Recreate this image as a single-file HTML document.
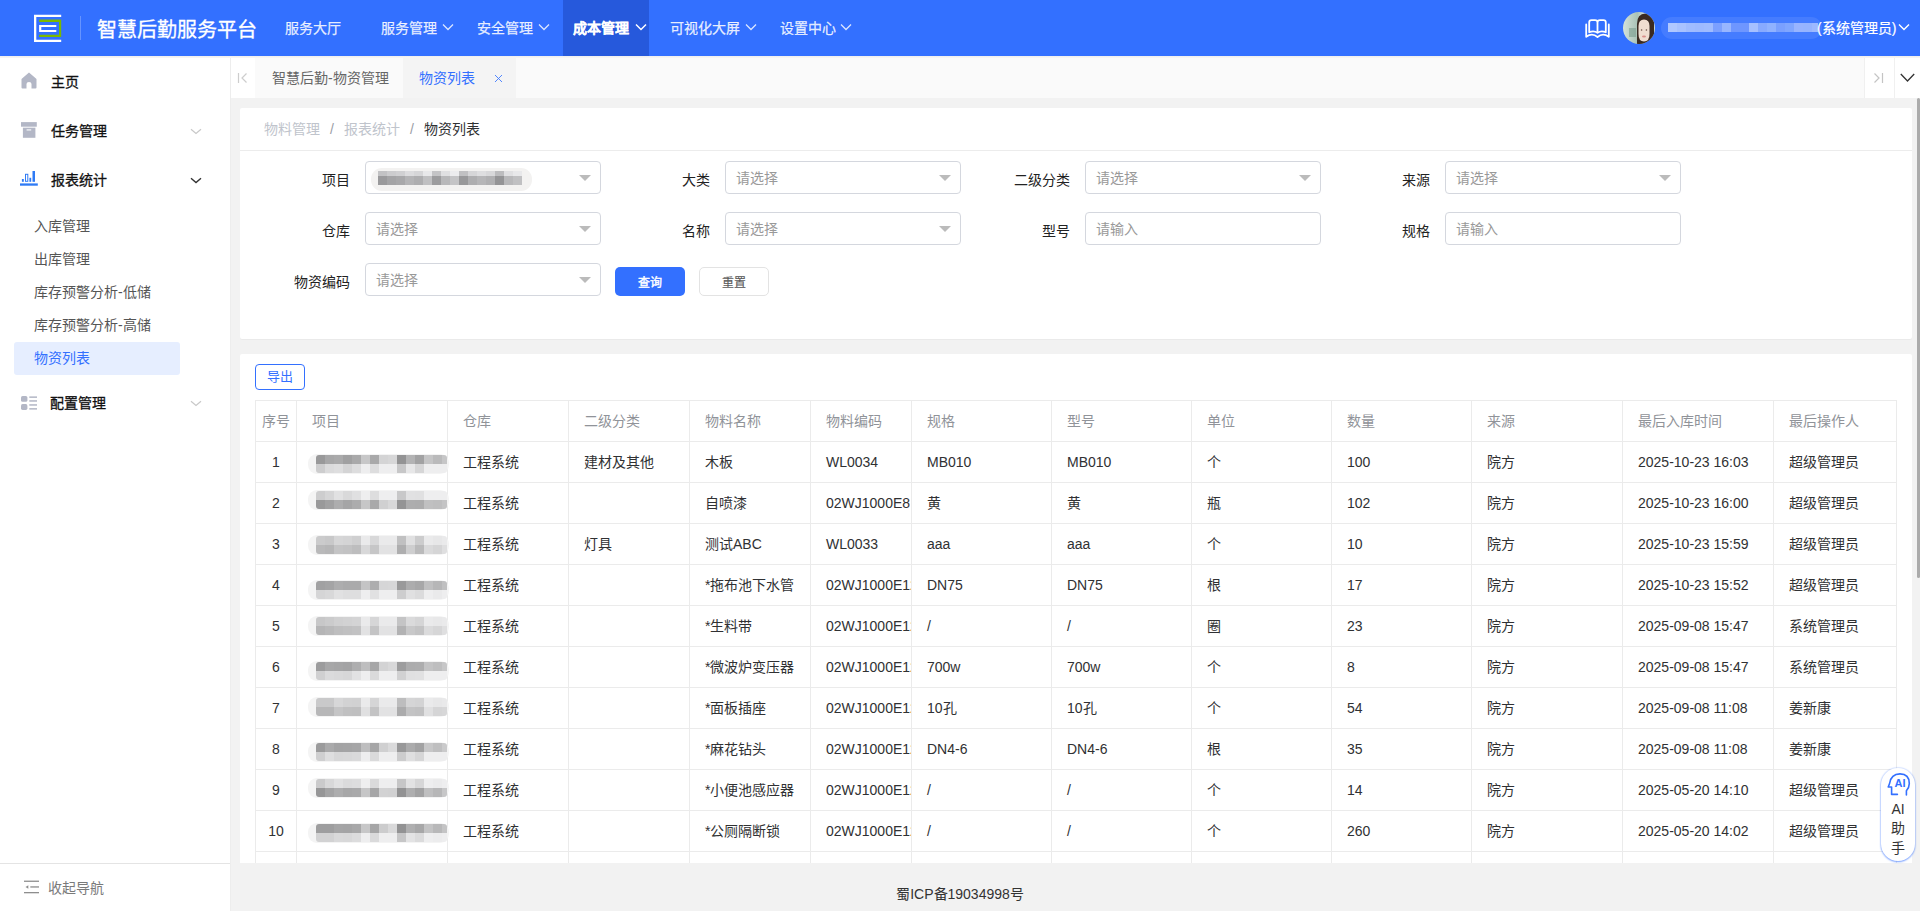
<!DOCTYPE html>
<html lang="zh-CN">
<head>
<meta charset="utf-8">
<style>
*{box-sizing:border-box;margin:0;padding:0}
html,body{width:1920px;height:911px;overflow:hidden}
body{position:relative;font-family:"Liberation Sans",sans-serif;font-size:14px;color:#303133;background:#f2f2f2}
.a{position:absolute}
.t{position:absolute;white-space:nowrap;line-height:20px}
#hdr{left:0;top:0;width:1920px;height:56px;background:#3370ff}
.nav{color:rgba(255,255,255,.86);font-size:14px;top:18px;-webkit-text-stroke:0.25px rgba(255,255,255,.86)}
.chev{position:absolute}
#side{left:0;top:56px;width:231px;height:855px;background:#fff;border-right:1px solid #ededed}
.m1{color:#111;font-size:14px;-webkit-text-stroke:0.3px #111}
.m2{color:#555;font-size:14px}
#tabs{left:231px;top:57px;width:1689px;height:41px;background:#fafafa}
.card{background:#fff;border-radius:2px;box-shadow:0 1px 1px rgba(0,0,0,.035)}
.lbl{color:#222;font-size:14px;text-align:right}
.sel{position:absolute;height:33px;width:236px;border:1px solid #d4d7de;border-radius:4px;background:#fff}
.sel .ph{position:absolute;left:10px;top:6px;line-height:20px;color:#999;font-size:14px}
.sel .ar{position:absolute;left:213px;top:13px;width:0;height:0;border-left:6px solid transparent;border-right:6px solid transparent;border-top:6px solid #bbb}
</style>
</head>
<body>
<!-- HEADER -->
<div id="hdr" class="a">
  <svg class="a" style="left:30px;top:10px" width="36" height="36" viewBox="0 0 36 36">
    <path fill="#fff" d="M4 4.7H31.2V6.9H6.3V29.8H31.2V32H4Z"/>
    <path fill="#7ab800" d="M9.1 9.5H31.2V27H9.1V24.7H29V11.9H9.1Z"/>
    <path fill="#fff" d="M9.1 15H26.3V17H11.3V20H26.3V21.9H9.1Z"/>
  </svg>
  <div class="a" style="left:80px;top:16px;width:1px;height:24px;background:rgba(255,255,255,.25)"></div>
  <div class="t" style="left:97px;top:17px;font-size:20px;line-height:26px;color:#fff;-webkit-text-stroke:0.3px #fff">智慧后勤服务平台</div>
  <div class="a" style="left:563px;top:0;width:86px;height:56px;background:#2659dc"></div>
  <div class="t nav" style="left:285px">服务大厅</div>
  <div class="t nav" style="left:381px">服务管理</div>
  <svg class="chev" style="left:442px;top:22px" width="12" height="10" viewBox="0 0 12 10"><path d="M1 2.5L6 7.5L11 2.5" fill="none" stroke="rgba(255,255,255,.82)" stroke-width="1.3"/></svg>
  <div class="t nav" style="left:477px">安全管理</div>
  <svg class="chev" style="left:538px;top:22px" width="12" height="10" viewBox="0 0 12 10"><path d="M1 2.5L6 7.5L11 2.5" fill="none" stroke="rgba(255,255,255,.82)" stroke-width="1.3"/></svg>
  <div class="t nav" style="left:573px;color:#fff;font-weight:bold">成本管理</div>
  <svg class="chev" style="left:635px;top:22px" width="12" height="10" viewBox="0 0 12 10"><path d="M1 2.5L6 7.5L11 2.5" fill="none" stroke="#fff" stroke-width="1.5"/></svg>
  <div class="t nav" style="left:670px">可视化大屏</div>
  <svg class="chev" style="left:745px;top:22px" width="12" height="10" viewBox="0 0 12 10"><path d="M1 2.5L6 7.5L11 2.5" fill="none" stroke="rgba(255,255,255,.82)" stroke-width="1.3"/></svg>
  <div class="t nav" style="left:780px">设置中心</div>
  <svg class="chev" style="left:840px;top:22px" width="12" height="10" viewBox="0 0 12 10"><path d="M1 2.5L6 7.5L11 2.5" fill="none" stroke="rgba(255,255,255,.82)" stroke-width="1.3"/></svg>
  <!-- book icon -->
  <svg class="a" style="left:1578px;top:10px" width="40" height="36" viewBox="0 0 40 36">
    <path d="M19.5 22.8C17 21 14 21 11.2 22.2V12.5Q11.2 10.2 13.5 10.2H17Q19.5 10.2 19.5 12.5Z M19.5 22.8C22 21 25 21 27.8 22.2V12.5Q27.8 10.2 25.5 10.2H22Q19.5 10.2 19.5 12.5Z" fill="none" stroke="#fff" stroke-width="1.8" stroke-linejoin="round"/>
    <path d="M8.2 14.5V26.8C12 24 16 24 19.5 27C23 24 27 24 30.8 26.8V14.5" fill="none" stroke="#fff" stroke-width="1.8" stroke-linejoin="round" stroke-linecap="round"/>
  </svg>
  <!-- avatar -->
  <svg class="a" style="left:1623px;top:12px" width="32" height="32" viewBox="0 0 32 32">
    <defs><clipPath id="cc"><circle cx="16" cy="16" r="16"/></clipPath>
    <linearGradient id="bgg" x1="0" y1="0" x2="1" y2="0"><stop offset="0" stop-color="#d4e2da"/><stop offset=".45" stop-color="#a9c2b6"/><stop offset=".6" stop-color="#c9d6cf"/></linearGradient></defs>
    <g clip-path="url(#cc)">
      <rect width="32" height="32" fill="url(#bgg)"/>
      <rect x="6" y="16" width="7" height="9" fill="#7a9c8e" opacity=".6"/>
      <path d="M14 34V12Q14 1.5 22.5 1.5Q31.5 1.5 31 12V30L27 34Z" fill="#3a2a22"/>
      <path d="M15.5 14Q15.5 7.5 21 7.5Q26.5 7.5 26.5 14V22Q26.5 29.5 21 29.5Q15.5 29.5 15.5 22Z" fill="#f0ddd0"/>
      <ellipse cx="21" cy="24.5" rx="2" ry="1" fill="#d98f8a"/>
      <circle cx="18.6" cy="18" r=".8" fill="#6b5046"/><circle cx="23.4" cy="18" r=".8" fill="#6b5046"/>
    </g>
  </svg>
  <!-- blurred name -->
  <div class="a" style="left:1812px;top:23px;width:6px;height:9px;background:#94b2ff"></div><div class="a" style="left:1661px;top:17px;width:161px;height:22px;border-radius:11px;background:rgba(255,255,255,.09)"></div>
  <div class="a" style="left:1668px;top:23px;width:9px;height:9px;background:#b0c8ff"></div><div class="a" style="left:1677px;top:23px;width:9px;height:9px;background:#a8c2ff"></div><div class="a" style="left:1686px;top:23px;width:9px;height:9px;background:#a0bcff"></div><div class="a" style="left:1695px;top:23px;width:9px;height:9px;background:#9ebaff"></div><div class="a" style="left:1704px;top:23px;width:9px;height:9px;background:#a0bcff"></div><div class="a" style="left:1713px;top:23px;width:9px;height:9px;background:#7ca0ff"></div><div class="a" style="left:1722px;top:23px;width:9px;height:9px;background:#98b6ff"></div><div class="a" style="left:1731px;top:23px;width:9px;height:9px;background:#6e96ff"></div><div class="a" style="left:1740px;top:23px;width:9px;height:9px;background:#6e96ff"></div><div class="a" style="left:1749px;top:23px;width:9px;height:9px;background:#a6c0ff"></div><div class="a" style="left:1758px;top:23px;width:9px;height:9px;background:#88aaff"></div><div class="a" style="left:1767px;top:23px;width:9px;height:9px;background:#90b2ff"></div><div class="a" style="left:1776px;top:23px;width:9px;height:9px;background:#7aa0ff"></div><div class="a" style="left:1785px;top:23px;width:9px;height:9px;background:#80a6ff"></div><div class="a" style="left:1794px;top:23px;width:9px;height:9px;background:#98b4ff"></div><div class="a" style="left:1803px;top:23px;width:9px;height:9px;background:#96b4ff"></div>
  <div class="t" style="left:1817px;top:18px;color:#fff;font-size:14px;-webkit-text-stroke:0.2px #fff">(系统管理员)</div>
  <svg class="chev" style="left:1898px;top:22px" width="12" height="10" viewBox="0 0 12 10"><path d="M1 2.5L6 7.5L11 2.5" fill="none" stroke="#fff" stroke-width="1.4"/></svg>
</div>


<!-- SIDEBAR -->
<div id="side" class="a">
  <svg class="a" style="left:21px;top:16px" width="16" height="17" viewBox="0 0 16 17"><path d="M8 0.5L15.5 7V15.5Q15.5 16.5 14.5 16.5H10.5V12Q10.5 10 8 10Q5.5 10 5.5 12V16.5H1.5Q0.5 16.5 0.5 15.5V7Z" fill="#b3b7c6"/></svg>
  <div class="t m1" style="left:51px;top:16px">主页</div>

  <svg class="a" style="left:21px;top:66px" width="16" height="16" viewBox="0 0 16 16"><rect x="0" y="0.1" width="15.8" height="4.6" fill="#b3b7c6"/><rect x="1.9" y="5.7" width="12.5" height="10.1" fill="#b3b7c6"/><rect x="5.6" y="7.1" width="4.6" height="1.6" fill="#e6e8ee"/></svg>
  <div class="t m1" style="left:51px;top:65px">任务管理</div>
  <svg class="a" style="left:190px;top:127px;top:71px" width="12" height="8" viewBox="0 0 12 8"><path d="M1 2.3L6 6.5L11 2.3" fill="none" stroke="#c8c8c8" stroke-width="1.2"/></svg>

  <svg class="a" style="left:20px;top:115px" width="18" height="16" viewBox="0 0 18 16"><rect x="0" y="12.4" width="17.8" height="2.3" fill="#2f7bf5"/><rect x="1.9" y="8" width="1.9" height="2.8" fill="#2f7bf5"/><rect x="5.5" y="3.3" width="2.3" height="7" fill="none" stroke="#2f7bf5" stroke-width="1"/><rect x="9.4" y="6.8" width="1.8" height="4" fill="#2f7bf5"/><rect x="12.5" y="0" width="2.5" height="10.8" fill="#2f7bf5"/></svg>
  <div class="t m1" style="left:51px;top:114px">报表统计</div>
  <svg class="a" style="left:190px;top:120px" width="12" height="8" viewBox="0 0 12 8"><path d="M1 2.2L6 6.5L11 2.2" fill="none" stroke="#333" stroke-width="1.4"/></svg>

  <div class="t m2" style="left:34px;top:160px">入库管理</div>
  <div class="t m2" style="left:34px;top:193px">出库管理</div>
  <div class="t m2" style="left:34px;top:226px">库存预警分析-低储</div>
  <div class="t m2" style="left:34px;top:259px">库存预警分析-高储</div>
  <div class="a" style="left:14px;top:286px;width:166px;height:33px;border-radius:3px;background:#e6eeff"></div>
  <div class="t m2" style="left:34px;top:292px;color:#3370ff">物资列表</div>

  <svg class="a" style="left:21px;top:340px" width="17" height="15" viewBox="0 0 17 15"><rect x="0" y="0" width="6.4" height="5.8" rx="1.6" fill="#b3b7c6"/><rect x="0" y="8.1" width="6.4" height="5.8" rx="1.6" fill="#b3b7c6"/><rect x="8.3" y="0.4" width="7.7" height="1.5" fill="#b3b7c6"/><rect x="8.3" y="4.2" width="7.7" height="1.5" fill="#b3b7c6"/><rect x="8.3" y="8.2" width="7.7" height="1.5" fill="#b3b7c6"/><rect x="8.3" y="12.1" width="7.7" height="1.5" fill="#b3b7c6"/></svg>
  <div class="t m1" style="left:50px;top:337px">配置管理</div>
  <svg class="a" style="left:190px;top:343px" width="12" height="8" viewBox="0 0 12 8"><path d="M1 2.3L6 6.5L11 2.3" fill="none" stroke="#c8c8c8" stroke-width="1.2"/></svg>

  <div class="a" style="left:0;top:807px;width:230px;height:1px;background:#e4e4e4"></div>
  <svg class="a" style="left:24px;top:824px" width="16" height="14" viewBox="0 0 16 14"><rect x="0" y="0.6" width="15" height="1.3" fill="#8e8e8e"/><rect x="6.3" y="6.3" width="8.7" height="1.3" fill="#8e8e8e"/><rect x="0" y="12" width="15" height="1.3" fill="#8e8e8e"/><path d="M1.5 7L4.3 5.2V8.8Z" fill="#8e8e8e"/></svg>
  <div class="t" style="left:48px;top:822px;color:#7a7a7a;font-size:14px">收起导航</div>
</div>

<!-- TABS -->
<div id="tabs" class="a">
  <div class="a" style="left:0;top:0;width:24px;height:41px;background:#fff"></div>
  <svg class="a" style="left:6px;top:15px" width="12" height="12" viewBox="0 0 12 12"><path d="M1.5 1V11" stroke="#cdcdcd" stroke-width="1.2"/><path d="M9.5 1.5L5 6L9.5 10.5" fill="none" stroke="#cdcdcd" stroke-width="1.2"/></svg>
  <div class="t" style="left:41px;top:11px;color:#666">智慧后勤-物资管理</div>
  <div class="a" style="left:172px;top:1px;width:113px;height:40px;background:#f4f4f4"></div>
  <div class="t" style="left:188px;top:11px;color:#3370ff">物资列表</div>
  <svg class="a" style="left:263px;top:17px" width="9" height="9" viewBox="0 0 9 9"><path d="M1 1L8 8M8 1L1 8" stroke="#3f7bff" stroke-width="0.9"/></svg>
  <div class="a" style="left:1633px;top:0;width:56px;height:41px;background:#fff"></div>
  <div class="a" style="left:1633px;top:0;width:1px;height:41px;background:#f0f0f0"></div>
  <div class="a" style="left:1663px;top:0;width:1px;height:41px;background:#f0f0f0"></div>
  <svg class="a" style="left:1641px;top:15px" width="12" height="12" viewBox="0 0 12 12"><path d="M10.5 1V11" stroke="#c4c4c4" stroke-width="1.2"/><path d="M2.5 1.5L7 6L2.5 10.5" fill="none" stroke="#c4c4c4" stroke-width="1.2"/></svg>
  <svg class="a" style="left:1669px;top:16px" width="15" height="10" viewBox="0 0 15 10"><path d="M0.8 1L7.5 8L14.2 1" fill="none" stroke="#333" stroke-width="1.3"/></svg>
</div>
<div class="a" style="left:0;top:56px;width:1920px;height:2px;background:linear-gradient(#ededed,#f6f6f6)"></div>

<div class="a" style="left:231px;top:98px;width:1686px;height:765px;overflow:hidden">
<div class="a card" style="left:9px;top:10px;width:1672px;height:231px">
<div class="t" style="left:24px;top:11px;color:#c0c4cc;font-size:14px">物料管理<span style="margin:0 10px;color:#9a9da5">/</span>报表统计<span style="margin:0 10px;color:#9a9da5">/</span><span style="color:#303133">物资列表</span></div>
<div class="a" style="left:0;top:42px;width:1672px;height:1px;background:#ececec"></div>
<div class="t lbl" style="left:10px;top:62px;width:100px">项目</div>
<div class="sel" style="left:125px;top:53px"><div class="a" style="left:5px;top:6px;width:161px;height:23px;border-radius:11px;background:#f3f2f1"></div><div class="a" style="left:12px;top:9px;width:9px;height:5px;background:rgb(194,194,196)"></div><div class="a" style="left:12px;top:14px;width:9px;height:9px;background:rgb(154,154,156)"></div><div class="a" style="left:21px;top:9px;width:9px;height:5px;background:rgb(204,204,206)"></div><div class="a" style="left:21px;top:14px;width:9px;height:9px;background:rgb(164,164,166)"></div><div class="a" style="left:30px;top:9px;width:9px;height:5px;background:rgb(208,208,210)"></div><div class="a" style="left:30px;top:14px;width:9px;height:9px;background:rgb(168,168,170)"></div><div class="a" style="left:39px;top:9px;width:9px;height:5px;background:rgb(220,220,222)"></div><div class="a" style="left:39px;top:14px;width:9px;height:9px;background:rgb(180,180,182)"></div><div class="a" style="left:48px;top:9px;width:9px;height:5px;background:rgb(214,214,216)"></div><div class="a" style="left:48px;top:14px;width:9px;height:9px;background:rgb(174,174,176)"></div><div class="a" style="left:57px;top:9px;width:9px;height:5px;background:rgb(232,232,234)"></div><div class="a" style="left:57px;top:14px;width:9px;height:9px;background:rgb(192,192,194)"></div><div class="a" style="left:66px;top:9px;width:9px;height:5px;background:rgb(196,196,198)"></div><div class="a" style="left:66px;top:14px;width:9px;height:9px;background:rgb(156,156,158)"></div><div class="a" style="left:75px;top:9px;width:9px;height:5px;background:rgb(224,224,226)"></div><div class="a" style="left:75px;top:14px;width:9px;height:9px;background:rgb(184,184,186)"></div><div class="a" style="left:84px;top:9px;width:9px;height:5px;background:rgb(236,236,238)"></div><div class="a" style="left:84px;top:14px;width:9px;height:9px;background:rgb(196,196,198)"></div><div class="a" style="left:93px;top:9px;width:9px;height:5px;background:rgb(192,192,194)"></div><div class="a" style="left:93px;top:14px;width:9px;height:9px;background:rgb(152,152,154)"></div><div class="a" style="left:102px;top:9px;width:9px;height:5px;background:rgb(214,214,216)"></div><div class="a" style="left:102px;top:14px;width:9px;height:9px;background:rgb(174,174,176)"></div><div class="a" style="left:111px;top:9px;width:9px;height:5px;background:rgb(222,222,224)"></div><div class="a" style="left:111px;top:14px;width:9px;height:9px;background:rgb(182,182,184)"></div><div class="a" style="left:120px;top:9px;width:9px;height:5px;background:rgb(216,216,218)"></div><div class="a" style="left:120px;top:14px;width:9px;height:9px;background:rgb(176,176,178)"></div><div class="a" style="left:129px;top:9px;width:9px;height:5px;background:rgb(188,188,190)"></div><div class="a" style="left:129px;top:14px;width:9px;height:9px;background:rgb(148,148,150)"></div><div class="a" style="left:138px;top:9px;width:9px;height:5px;background:rgb(224,224,226)"></div><div class="a" style="left:138px;top:14px;width:9px;height:9px;background:rgb(184,184,186)"></div><div class="a" style="left:147px;top:9px;width:9px;height:5px;background:rgb(232,232,234)"></div><div class="a" style="left:147px;top:14px;width:9px;height:9px;background:rgb(192,192,194)"></div><div class="ar"></div></div>
<div class="t lbl" style="left:370px;top:62px;width:100px">大类</div>
<div class="sel" style="left:485px;top:53px"><div class="ph">请选择</div><div class="ar"></div></div>
<div class="t lbl" style="left:730px;top:62px;width:100px">二级分类</div>
<div class="sel" style="left:845px;top:53px"><div class="ph">请选择</div><div class="ar"></div></div>
<div class="t lbl" style="left:1090px;top:62px;width:100px">来源</div>
<div class="sel" style="left:1205px;top:53px"><div class="ph">请选择</div><div class="ar"></div></div>
<div class="t lbl" style="left:10px;top:113px;width:100px">仓库</div>
<div class="sel" style="left:125px;top:104px"><div class="ph">请选择</div><div class="ar"></div></div>
<div class="t lbl" style="left:370px;top:113px;width:100px">名称</div>
<div class="sel" style="left:485px;top:104px"><div class="ph">请选择</div><div class="ar"></div></div>
<div class="t lbl" style="left:730px;top:113px;width:100px">型号</div>
<div class="sel" style="left:845px;top:104px"><div class="ph">请输入</div></div>
<div class="t lbl" style="left:1090px;top:113px;width:100px">规格</div>
<div class="sel" style="left:1205px;top:104px"><div class="ph">请输入</div></div>
<div class="t lbl" style="left:10px;top:164px;width:100px">物资编码</div>
<div class="sel" style="left:125px;top:155px"><div class="ph">请选择</div><div class="ar"></div></div>
<div class="a" style="left:375px;top:159px;width:70px;height:29px;border-radius:5px;background:#3370ff;color:#fff;font-size:12px;-webkit-text-stroke:0.4px #fff;text-align:center;line-height:32px">查询</div>
<div class="a" style="left:459px;top:159px;width:70px;height:29px;border-radius:5px;background:#fff;border:1px solid #e3e3e3;color:#5a5a5a;font-size:12px;-webkit-text-stroke:0.15px #5a5a5a;text-align:center;line-height:30px">重置</div>
</div>
<div class="a card" style="left:9px;top:256px;width:1672px;height:520px">
<div class="a" style="left:15px;top:10px;width:50px;height:26px;border:1px solid #3370ff;border-radius:4px;color:#3370ff;font-size:13px;text-align:center;line-height:24px">导出</div>
<div class="a" style="left:15px;top:46px;width:1px;height:520px;background:#ebebeb"></div>
<div class="a" style="left:56px;top:46px;width:1px;height:520px;background:#ebebeb"></div>
<div class="a" style="left:207px;top:46px;width:1px;height:520px;background:#ebebeb"></div>
<div class="a" style="left:328px;top:46px;width:1px;height:520px;background:#ebebeb"></div>
<div class="a" style="left:449px;top:46px;width:1px;height:520px;background:#ebebeb"></div>
<div class="a" style="left:570px;top:46px;width:1px;height:520px;background:#ebebeb"></div>
<div class="a" style="left:671px;top:46px;width:1px;height:520px;background:#ebebeb"></div>
<div class="a" style="left:811px;top:46px;width:1px;height:520px;background:#ebebeb"></div>
<div class="a" style="left:951px;top:46px;width:1px;height:520px;background:#ebebeb"></div>
<div class="a" style="left:1091px;top:46px;width:1px;height:520px;background:#ebebeb"></div>
<div class="a" style="left:1231px;top:46px;width:1px;height:520px;background:#ebebeb"></div>
<div class="a" style="left:1382px;top:46px;width:1px;height:520px;background:#ebebeb"></div>
<div class="a" style="left:1533px;top:46px;width:1px;height:520px;background:#ebebeb"></div>
<div class="a" style="left:1656px;top:46px;width:1px;height:520px;background:#ebebeb"></div>
<div class="a" style="left:15px;top:46px;width:1642px;height:1px;background:#ebebeb"></div>
<div class="a" style="left:15px;top:87px;width:1642px;height:1px;background:#ebebeb"></div>
<div class="a" style="left:15px;top:128px;width:1642px;height:1px;background:#ebebeb"></div>
<div class="a" style="left:15px;top:169px;width:1642px;height:1px;background:#ebebeb"></div>
<div class="a" style="left:15px;top:210px;width:1642px;height:1px;background:#ebebeb"></div>
<div class="a" style="left:15px;top:251px;width:1642px;height:1px;background:#ebebeb"></div>
<div class="a" style="left:15px;top:292px;width:1642px;height:1px;background:#ebebeb"></div>
<div class="a" style="left:15px;top:333px;width:1642px;height:1px;background:#ebebeb"></div>
<div class="a" style="left:15px;top:374px;width:1642px;height:1px;background:#ebebeb"></div>
<div class="a" style="left:15px;top:415px;width:1642px;height:1px;background:#ebebeb"></div>
<div class="a" style="left:15px;top:456px;width:1642px;height:1px;background:#ebebeb"></div>
<div class="a" style="left:15px;top:497px;width:1642px;height:1px;background:#ebebeb"></div>
<div class="a" style="left:15px;top:538px;width:1642px;height:1px;background:#ebebeb"></div>
<div class="t" style="left:16px;top:57px;width:40px;text-align:center;color:#909399">序号</div>
<div class="t" style="left:57px;top:57px;width:150px;padding-left:15px;overflow:hidden;color:#909399">项目</div>
<div class="t" style="left:208px;top:57px;width:120px;padding-left:15px;overflow:hidden;color:#909399">仓库</div>
<div class="t" style="left:329px;top:57px;width:120px;padding-left:15px;overflow:hidden;color:#909399">二级分类</div>
<div class="t" style="left:450px;top:57px;width:120px;padding-left:15px;overflow:hidden;color:#909399">物料名称</div>
<div class="t" style="left:571px;top:57px;width:100px;padding-left:15px;overflow:hidden;color:#909399">物料编码</div>
<div class="t" style="left:672px;top:57px;width:139px;padding-left:15px;overflow:hidden;color:#909399">规格</div>
<div class="t" style="left:812px;top:57px;width:139px;padding-left:15px;overflow:hidden;color:#909399">型号</div>
<div class="t" style="left:952px;top:57px;width:139px;padding-left:15px;overflow:hidden;color:#909399">单位</div>
<div class="t" style="left:1092px;top:57px;width:139px;padding-left:15px;overflow:hidden;color:#909399">数量</div>
<div class="t" style="left:1232px;top:57px;width:150px;padding-left:15px;overflow:hidden;color:#909399">来源</div>
<div class="t" style="left:1383px;top:57px;width:150px;padding-left:15px;overflow:hidden;color:#909399">最后入库时间</div>
<div class="t" style="left:1534px;top:57px;width:122px;padding-left:15px;overflow:hidden;color:#909399">最后操作人</div>
<div class="t" style="left:16px;top:98px;width:40px;text-align:center;color:#303133">1</div>
<div class="t" style="left:208px;top:98px;width:120px;padding-left:15px;overflow:hidden;color:#303133">工程系统</div>
<div class="t" style="left:329px;top:98px;width:120px;padding-left:15px;overflow:hidden;color:#303133">建材及其他</div>
<div class="t" style="left:450px;top:98px;width:120px;padding-left:15px;overflow:hidden;color:#303133">木板</div>
<div class="t" style="left:571px;top:98px;width:100px;padding-left:15px;overflow:hidden;color:#303133">WL0034</div>
<div class="t" style="left:672px;top:98px;width:139px;padding-left:15px;overflow:hidden;color:#303133">MB010</div>
<div class="t" style="left:812px;top:98px;width:139px;padding-left:15px;overflow:hidden;color:#303133">MB010</div>
<div class="t" style="left:952px;top:98px;width:139px;padding-left:15px;overflow:hidden;color:#303133">个</div>
<div class="t" style="left:1092px;top:98px;width:139px;padding-left:15px;overflow:hidden;color:#303133">100</div>
<div class="t" style="left:1232px;top:98px;width:150px;padding-left:15px;overflow:hidden;color:#303133">院方</div>
<div class="t" style="left:1383px;top:98px;width:150px;padding-left:15px;overflow:hidden;color:#303133">2025-10-23 16:03</div>
<div class="t" style="left:1534px;top:98px;width:122px;padding-left:15px;overflow:hidden;color:#303133">超级管理员</div>
<div class="a" style="left:68px;top:100px;width:141px;height:20px;border-radius:9px;background:#f4f4f4"></div>
<div class="a" style="left:76px;top:101px;width:131px;height:18px;border-radius:3px;overflow:hidden"><div class="a" style="left:0px;top:0;width:9px;height:9px;background:rgb(153,153,154)"></div><div class="a" style="left:0px;top:9px;width:9px;height:9px;background:rgb(205,205,206)"></div><div class="a" style="left:9px;top:0;width:9px;height:9px;background:rgb(167,167,168)"></div><div class="a" style="left:9px;top:9px;width:9px;height:9px;background:rgb(219,219,220)"></div><div class="a" style="left:18px;top:0;width:9px;height:9px;background:rgb(170,170,171)"></div><div class="a" style="left:18px;top:9px;width:9px;height:9px;background:rgb(222,222,223)"></div><div class="a" style="left:27px;top:0;width:9px;height:9px;background:rgb(160,160,161)"></div><div class="a" style="left:27px;top:9px;width:9px;height:9px;background:rgb(212,212,213)"></div><div class="a" style="left:36px;top:0;width:9px;height:9px;background:rgb(169,169,170)"></div><div class="a" style="left:36px;top:9px;width:9px;height:9px;background:rgb(221,221,222)"></div><div class="a" style="left:45px;top:0;width:9px;height:9px;background:rgb(199,199,200)"></div><div class="a" style="left:45px;top:9px;width:9px;height:9px;background:rgb(238,238,239)"></div><div class="a" style="left:54px;top:0;width:9px;height:9px;background:rgb(169,169,170)"></div><div class="a" style="left:54px;top:9px;width:9px;height:9px;background:rgb(221,221,222)"></div><div class="a" style="left:63px;top:0;width:9px;height:9px;background:rgb(212,212,213)"></div><div class="a" style="left:63px;top:9px;width:9px;height:9px;background:rgb(238,238,239)"></div><div class="a" style="left:72px;top:0;width:9px;height:9px;background:rgb(215,215,216)"></div><div class="a" style="left:72px;top:9px;width:9px;height:9px;background:rgb(238,238,239)"></div><div class="a" style="left:81px;top:0;width:9px;height:9px;background:rgb(147,147,148)"></div><div class="a" style="left:81px;top:9px;width:9px;height:9px;background:rgb(199,199,200)"></div><div class="a" style="left:90px;top:0;width:9px;height:9px;background:rgb(179,179,180)"></div><div class="a" style="left:90px;top:9px;width:9px;height:9px;background:rgb(231,231,232)"></div><div class="a" style="left:99px;top:0;width:9px;height:9px;background:rgb(162,162,163)"></div><div class="a" style="left:99px;top:9px;width:9px;height:9px;background:rgb(214,214,215)"></div><div class="a" style="left:108px;top:0;width:9px;height:9px;background:rgb(197,197,198)"></div><div class="a" style="left:108px;top:9px;width:9px;height:9px;background:rgb(238,238,239)"></div><div class="a" style="left:117px;top:0;width:9px;height:9px;background:rgb(186,186,187)"></div><div class="a" style="left:117px;top:9px;width:9px;height:9px;background:rgb(238,238,239)"></div><div class="a" style="left:126px;top:0;width:9px;height:9px;background:rgb(198,198,199)"></div><div class="a" style="left:126px;top:9px;width:9px;height:9px;background:rgb(238,238,239)"></div></div>
<div class="t" style="left:16px;top:139px;width:40px;text-align:center;color:#303133">2</div>
<div class="t" style="left:208px;top:139px;width:120px;padding-left:15px;overflow:hidden;color:#303133">工程系统</div>
<div class="t" style="left:450px;top:139px;width:120px;padding-left:15px;overflow:hidden;color:#303133">自喷漆</div>
<div class="t" style="left:571px;top:139px;width:100px;padding-left:15px;overflow:hidden;color:#303133">02WJ1000E8</div>
<div class="t" style="left:672px;top:139px;width:139px;padding-left:15px;overflow:hidden;color:#303133">黄</div>
<div class="t" style="left:812px;top:139px;width:139px;padding-left:15px;overflow:hidden;color:#303133">黄</div>
<div class="t" style="left:952px;top:139px;width:139px;padding-left:15px;overflow:hidden;color:#303133">瓶</div>
<div class="t" style="left:1092px;top:139px;width:139px;padding-left:15px;overflow:hidden;color:#303133">102</div>
<div class="t" style="left:1232px;top:139px;width:150px;padding-left:15px;overflow:hidden;color:#303133">院方</div>
<div class="t" style="left:1383px;top:139px;width:150px;padding-left:15px;overflow:hidden;color:#303133">2025-10-23 16:00</div>
<div class="t" style="left:1534px;top:139px;width:122px;padding-left:15px;overflow:hidden;color:#303133">超级管理员</div>
<div class="a" style="left:68px;top:136px;width:141px;height:20px;border-radius:9px;background:#f4f4f4"></div>
<div class="a" style="left:76px;top:137px;width:131px;height:18px;border-radius:3px;overflow:hidden"><div class="a" style="left:0px;top:0;width:9px;height:9px;background:rgb(205,205,206)"></div><div class="a" style="left:0px;top:9px;width:9px;height:9px;background:rgb(153,153,154)"></div><div class="a" style="left:9px;top:0;width:9px;height:9px;background:rgb(213,213,214)"></div><div class="a" style="left:9px;top:9px;width:9px;height:9px;background:rgb(161,161,162)"></div><div class="a" style="left:18px;top:0;width:9px;height:9px;background:rgb(225,225,226)"></div><div class="a" style="left:18px;top:9px;width:9px;height:9px;background:rgb(173,173,174)"></div><div class="a" style="left:27px;top:0;width:9px;height:9px;background:rgb(217,217,218)"></div><div class="a" style="left:27px;top:9px;width:9px;height:9px;background:rgb(165,165,166)"></div><div class="a" style="left:36px;top:0;width:9px;height:9px;background:rgb(224,224,225)"></div><div class="a" style="left:36px;top:9px;width:9px;height:9px;background:rgb(172,172,173)"></div><div class="a" style="left:45px;top:0;width:9px;height:9px;background:rgb(238,238,239)"></div><div class="a" style="left:45px;top:9px;width:9px;height:9px;background:rgb(198,198,199)"></div><div class="a" style="left:54px;top:0;width:9px;height:9px;background:rgb(221,221,222)"></div><div class="a" style="left:54px;top:9px;width:9px;height:9px;background:rgb(169,169,170)"></div><div class="a" style="left:63px;top:0;width:9px;height:9px;background:rgb(238,238,239)"></div><div class="a" style="left:63px;top:9px;width:9px;height:9px;background:rgb(208,208,209)"></div><div class="a" style="left:72px;top:0;width:9px;height:9px;background:rgb(238,238,239)"></div><div class="a" style="left:72px;top:9px;width:9px;height:9px;background:rgb(216,216,217)"></div><div class="a" style="left:81px;top:0;width:9px;height:9px;background:rgb(200,200,201)"></div><div class="a" style="left:81px;top:9px;width:9px;height:9px;background:rgb(148,148,149)"></div><div class="a" style="left:90px;top:0;width:9px;height:9px;background:rgb(225,225,226)"></div><div class="a" style="left:90px;top:9px;width:9px;height:9px;background:rgb(173,173,174)"></div><div class="a" style="left:99px;top:0;width:9px;height:9px;background:rgb(224,224,225)"></div><div class="a" style="left:99px;top:9px;width:9px;height:9px;background:rgb(172,172,173)"></div><div class="a" style="left:108px;top:0;width:9px;height:9px;background:rgb(238,238,239)"></div><div class="a" style="left:108px;top:9px;width:9px;height:9px;background:rgb(192,192,193)"></div><div class="a" style="left:117px;top:0;width:9px;height:9px;background:rgb(238,238,239)"></div><div class="a" style="left:117px;top:9px;width:9px;height:9px;background:rgb(190,190,191)"></div><div class="a" style="left:126px;top:0;width:9px;height:9px;background:rgb(238,238,239)"></div><div class="a" style="left:126px;top:9px;width:9px;height:9px;background:rgb(196,196,197)"></div></div>
<div class="t" style="left:16px;top:180px;width:40px;text-align:center;color:#303133">3</div>
<div class="t" style="left:208px;top:180px;width:120px;padding-left:15px;overflow:hidden;color:#303133">工程系统</div>
<div class="t" style="left:329px;top:180px;width:120px;padding-left:15px;overflow:hidden;color:#303133">灯具</div>
<div class="t" style="left:450px;top:180px;width:120px;padding-left:15px;overflow:hidden;color:#303133">测试ABC</div>
<div class="t" style="left:571px;top:180px;width:100px;padding-left:15px;overflow:hidden;color:#303133">WL0033</div>
<div class="t" style="left:672px;top:180px;width:139px;padding-left:15px;overflow:hidden;color:#303133">aaa</div>
<div class="t" style="left:812px;top:180px;width:139px;padding-left:15px;overflow:hidden;color:#303133">aaa</div>
<div class="t" style="left:952px;top:180px;width:139px;padding-left:15px;overflow:hidden;color:#303133">个</div>
<div class="t" style="left:1092px;top:180px;width:139px;padding-left:15px;overflow:hidden;color:#303133">10</div>
<div class="t" style="left:1232px;top:180px;width:150px;padding-left:15px;overflow:hidden;color:#303133">院方</div>
<div class="t" style="left:1383px;top:180px;width:150px;padding-left:15px;overflow:hidden;color:#303133">2025-10-23 15:59</div>
<div class="t" style="left:1534px;top:180px;width:122px;padding-left:15px;overflow:hidden;color:#303133">超级管理员</div>
<div class="a" style="left:68px;top:181px;width:141px;height:20px;border-radius:9px;background:#f4f4f4"></div>
<div class="a" style="left:76px;top:182px;width:131px;height:18px;border-radius:3px;overflow:hidden"><div class="a" style="left:0px;top:0;width:9px;height:9px;background:rgb(203,203,204)"></div><div class="a" style="left:0px;top:9px;width:9px;height:9px;background:rgb(185,185,186)"></div><div class="a" style="left:9px;top:0;width:9px;height:9px;background:rgb(200,200,201)"></div><div class="a" style="left:9px;top:9px;width:9px;height:9px;background:rgb(182,182,183)"></div><div class="a" style="left:18px;top:0;width:9px;height:9px;background:rgb(214,214,215)"></div><div class="a" style="left:18px;top:9px;width:9px;height:9px;background:rgb(196,196,197)"></div><div class="a" style="left:27px;top:0;width:9px;height:9px;background:rgb(212,212,213)"></div><div class="a" style="left:27px;top:9px;width:9px;height:9px;background:rgb(194,194,195)"></div><div class="a" style="left:36px;top:0;width:9px;height:9px;background:rgb(207,207,208)"></div><div class="a" style="left:36px;top:9px;width:9px;height:9px;background:rgb(189,189,190)"></div><div class="a" style="left:45px;top:0;width:9px;height:9px;background:rgb(234,234,235)"></div><div class="a" style="left:45px;top:9px;width:9px;height:9px;background:rgb(216,216,217)"></div><div class="a" style="left:54px;top:0;width:9px;height:9px;background:rgb(216,216,217)"></div><div class="a" style="left:54px;top:9px;width:9px;height:9px;background:rgb(198,198,199)"></div><div class="a" style="left:63px;top:0;width:9px;height:9px;background:rgb(234,234,235)"></div><div class="a" style="left:63px;top:9px;width:9px;height:9px;background:rgb(226,226,227)"></div><div class="a" style="left:72px;top:0;width:9px;height:9px;background:rgb(234,234,235)"></div><div class="a" style="left:72px;top:9px;width:9px;height:9px;background:rgb(226,226,227)"></div><div class="a" style="left:81px;top:0;width:9px;height:9px;background:rgb(192,192,193)"></div><div class="a" style="left:81px;top:9px;width:9px;height:9px;background:rgb(174,174,175)"></div><div class="a" style="left:90px;top:0;width:9px;height:9px;background:rgb(224,224,225)"></div><div class="a" style="left:90px;top:9px;width:9px;height:9px;background:rgb(206,206,207)"></div><div class="a" style="left:99px;top:0;width:9px;height:9px;background:rgb(204,204,205)"></div><div class="a" style="left:99px;top:9px;width:9px;height:9px;background:rgb(186,186,187)"></div><div class="a" style="left:108px;top:0;width:9px;height:9px;background:rgb(234,234,235)"></div><div class="a" style="left:108px;top:9px;width:9px;height:9px;background:rgb(218,218,219)"></div><div class="a" style="left:117px;top:0;width:9px;height:9px;background:rgb(231,231,232)"></div><div class="a" style="left:117px;top:9px;width:9px;height:9px;background:rgb(213,213,214)"></div><div class="a" style="left:126px;top:0;width:9px;height:9px;background:rgb(234,234,235)"></div><div class="a" style="left:126px;top:9px;width:9px;height:9px;background:rgb(223,223,224)"></div></div>
<div class="t" style="left:16px;top:221px;width:40px;text-align:center;color:#303133">4</div>
<div class="t" style="left:208px;top:221px;width:120px;padding-left:15px;overflow:hidden;color:#303133">工程系统</div>
<div class="t" style="left:450px;top:221px;width:120px;padding-left:15px;overflow:hidden;color:#303133">*拖布池下水管</div>
<div class="t" style="left:571px;top:221px;width:100px;padding-left:15px;overflow:hidden;color:#303133">02WJ1000E12</div>
<div class="t" style="left:672px;top:221px;width:139px;padding-left:15px;overflow:hidden;color:#303133">DN75</div>
<div class="t" style="left:812px;top:221px;width:139px;padding-left:15px;overflow:hidden;color:#303133">DN75</div>
<div class="t" style="left:952px;top:221px;width:139px;padding-left:15px;overflow:hidden;color:#303133">根</div>
<div class="t" style="left:1092px;top:221px;width:139px;padding-left:15px;overflow:hidden;color:#303133">17</div>
<div class="t" style="left:1232px;top:221px;width:150px;padding-left:15px;overflow:hidden;color:#303133">院方</div>
<div class="t" style="left:1383px;top:221px;width:150px;padding-left:15px;overflow:hidden;color:#303133">2025-10-23 15:52</div>
<div class="t" style="left:1534px;top:221px;width:122px;padding-left:15px;overflow:hidden;color:#303133">超级管理员</div>
<div class="a" style="left:68px;top:226px;width:141px;height:20px;border-radius:9px;background:#f4f4f4"></div>
<div class="a" style="left:76px;top:227px;width:131px;height:18px;border-radius:3px;overflow:hidden"><div class="a" style="left:0px;top:0;width:9px;height:9px;background:rgb(161,161,162)"></div><div class="a" style="left:0px;top:9px;width:9px;height:9px;background:rgb(213,213,214)"></div><div class="a" style="left:9px;top:0;width:9px;height:9px;background:rgb(164,164,165)"></div><div class="a" style="left:9px;top:9px;width:9px;height:9px;background:rgb(216,216,217)"></div><div class="a" style="left:18px;top:0;width:9px;height:9px;background:rgb(173,173,174)"></div><div class="a" style="left:18px;top:9px;width:9px;height:9px;background:rgb(225,225,226)"></div><div class="a" style="left:27px;top:0;width:9px;height:9px;background:rgb(170,170,171)"></div><div class="a" style="left:27px;top:9px;width:9px;height:9px;background:rgb(222,222,223)"></div><div class="a" style="left:36px;top:0;width:9px;height:9px;background:rgb(170,170,171)"></div><div class="a" style="left:36px;top:9px;width:9px;height:9px;background:rgb(222,222,223)"></div><div class="a" style="left:45px;top:0;width:9px;height:9px;background:rgb(196,196,197)"></div><div class="a" style="left:45px;top:9px;width:9px;height:9px;background:rgb(238,238,239)"></div><div class="a" style="left:54px;top:0;width:9px;height:9px;background:rgb(173,173,174)"></div><div class="a" style="left:54px;top:9px;width:9px;height:9px;background:rgb(225,225,226)"></div><div class="a" style="left:63px;top:0;width:9px;height:9px;background:rgb(214,214,215)"></div><div class="a" style="left:63px;top:9px;width:9px;height:9px;background:rgb(238,238,239)"></div><div class="a" style="left:72px;top:0;width:9px;height:9px;background:rgb(215,215,216)"></div><div class="a" style="left:72px;top:9px;width:9px;height:9px;background:rgb(238,238,239)"></div><div class="a" style="left:81px;top:0;width:9px;height:9px;background:rgb(153,153,154)"></div><div class="a" style="left:81px;top:9px;width:9px;height:9px;background:rgb(205,205,206)"></div><div class="a" style="left:90px;top:0;width:9px;height:9px;background:rgb(172,172,173)"></div><div class="a" style="left:90px;top:9px;width:9px;height:9px;background:rgb(224,224,225)"></div><div class="a" style="left:99px;top:0;width:9px;height:9px;background:rgb(167,167,168)"></div><div class="a" style="left:99px;top:9px;width:9px;height:9px;background:rgb(219,219,220)"></div><div class="a" style="left:108px;top:0;width:9px;height:9px;background:rgb(191,191,192)"></div><div class="a" style="left:108px;top:9px;width:9px;height:9px;background:rgb(238,238,239)"></div><div class="a" style="left:117px;top:0;width:9px;height:9px;background:rgb(182,182,183)"></div><div class="a" style="left:117px;top:9px;width:9px;height:9px;background:rgb(234,234,235)"></div><div class="a" style="left:126px;top:0;width:9px;height:9px;background:rgb(192,192,193)"></div><div class="a" style="left:126px;top:9px;width:9px;height:9px;background:rgb(238,238,239)"></div></div>
<div class="t" style="left:16px;top:262px;width:40px;text-align:center;color:#303133">5</div>
<div class="t" style="left:208px;top:262px;width:120px;padding-left:15px;overflow:hidden;color:#303133">工程系统</div>
<div class="t" style="left:450px;top:262px;width:120px;padding-left:15px;overflow:hidden;color:#303133">*生料带</div>
<div class="t" style="left:571px;top:262px;width:100px;padding-left:15px;overflow:hidden;color:#303133">02WJ1000E12</div>
<div class="t" style="left:672px;top:262px;width:139px;padding-left:15px;overflow:hidden;color:#303133">/</div>
<div class="t" style="left:812px;top:262px;width:139px;padding-left:15px;overflow:hidden;color:#303133">/</div>
<div class="t" style="left:952px;top:262px;width:139px;padding-left:15px;overflow:hidden;color:#303133">圈</div>
<div class="t" style="left:1092px;top:262px;width:139px;padding-left:15px;overflow:hidden;color:#303133">23</div>
<div class="t" style="left:1232px;top:262px;width:150px;padding-left:15px;overflow:hidden;color:#303133">院方</div>
<div class="t" style="left:1383px;top:262px;width:150px;padding-left:15px;overflow:hidden;color:#303133">2025-09-08 15:47</div>
<div class="t" style="left:1534px;top:262px;width:122px;padding-left:15px;overflow:hidden;color:#303133">系统管理员</div>
<div class="a" style="left:68px;top:262px;width:141px;height:20px;border-radius:9px;background:#f4f4f4"></div>
<div class="a" style="left:76px;top:263px;width:131px;height:18px;border-radius:3px;overflow:hidden"><div class="a" style="left:0px;top:0;width:9px;height:9px;background:rgb(199,199,200)"></div><div class="a" style="left:0px;top:9px;width:9px;height:9px;background:rgb(181,181,182)"></div><div class="a" style="left:9px;top:0;width:9px;height:9px;background:rgb(203,203,204)"></div><div class="a" style="left:9px;top:9px;width:9px;height:9px;background:rgb(185,185,186)"></div><div class="a" style="left:18px;top:0;width:9px;height:9px;background:rgb(208,208,209)"></div><div class="a" style="left:18px;top:9px;width:9px;height:9px;background:rgb(190,190,191)"></div><div class="a" style="left:27px;top:0;width:9px;height:9px;background:rgb(210,210,211)"></div><div class="a" style="left:27px;top:9px;width:9px;height:9px;background:rgb(192,192,193)"></div><div class="a" style="left:36px;top:0;width:9px;height:9px;background:rgb(212,212,213)"></div><div class="a" style="left:36px;top:9px;width:9px;height:9px;background:rgb(194,194,195)"></div><div class="a" style="left:45px;top:0;width:9px;height:9px;background:rgb(234,234,235)"></div><div class="a" style="left:45px;top:9px;width:9px;height:9px;background:rgb(226,226,227)"></div><div class="a" style="left:54px;top:0;width:9px;height:9px;background:rgb(214,214,215)"></div><div class="a" style="left:54px;top:9px;width:9px;height:9px;background:rgb(196,196,197)"></div><div class="a" style="left:63px;top:0;width:9px;height:9px;background:rgb(234,234,235)"></div><div class="a" style="left:63px;top:9px;width:9px;height:9px;background:rgb(226,226,227)"></div><div class="a" style="left:72px;top:0;width:9px;height:9px;background:rgb(234,234,235)"></div><div class="a" style="left:72px;top:9px;width:9px;height:9px;background:rgb(226,226,227)"></div><div class="a" style="left:81px;top:0;width:9px;height:9px;background:rgb(196,196,197)"></div><div class="a" style="left:81px;top:9px;width:9px;height:9px;background:rgb(178,178,179)"></div><div class="a" style="left:90px;top:0;width:9px;height:9px;background:rgb(218,218,219)"></div><div class="a" style="left:90px;top:9px;width:9px;height:9px;background:rgb(200,200,201)"></div><div class="a" style="left:99px;top:0;width:9px;height:9px;background:rgb(213,213,214)"></div><div class="a" style="left:99px;top:9px;width:9px;height:9px;background:rgb(195,195,196)"></div><div class="a" style="left:108px;top:0;width:9px;height:9px;background:rgb(234,234,235)"></div><div class="a" style="left:108px;top:9px;width:9px;height:9px;background:rgb(219,219,220)"></div><div class="a" style="left:117px;top:0;width:9px;height:9px;background:rgb(232,232,233)"></div><div class="a" style="left:117px;top:9px;width:9px;height:9px;background:rgb(214,214,215)"></div><div class="a" style="left:126px;top:0;width:9px;height:9px;background:rgb(234,234,235)"></div><div class="a" style="left:126px;top:9px;width:9px;height:9px;background:rgb(223,223,224)"></div></div>
<div class="t" style="left:16px;top:303px;width:40px;text-align:center;color:#303133">6</div>
<div class="t" style="left:208px;top:303px;width:120px;padding-left:15px;overflow:hidden;color:#303133">工程系统</div>
<div class="t" style="left:450px;top:303px;width:120px;padding-left:15px;overflow:hidden;color:#303133">*微波炉变压器</div>
<div class="t" style="left:571px;top:303px;width:100px;padding-left:15px;overflow:hidden;color:#303133">02WJ1000E12</div>
<div class="t" style="left:672px;top:303px;width:139px;padding-left:15px;overflow:hidden;color:#303133">700w</div>
<div class="t" style="left:812px;top:303px;width:139px;padding-left:15px;overflow:hidden;color:#303133">700w</div>
<div class="t" style="left:952px;top:303px;width:139px;padding-left:15px;overflow:hidden;color:#303133">个</div>
<div class="t" style="left:1092px;top:303px;width:139px;padding-left:15px;overflow:hidden;color:#303133">8</div>
<div class="t" style="left:1232px;top:303px;width:150px;padding-left:15px;overflow:hidden;color:#303133">院方</div>
<div class="t" style="left:1383px;top:303px;width:150px;padding-left:15px;overflow:hidden;color:#303133">2025-09-08 15:47</div>
<div class="t" style="left:1534px;top:303px;width:122px;padding-left:15px;overflow:hidden;color:#303133">系统管理员</div>
<div class="a" style="left:68px;top:307px;width:141px;height:20px;border-radius:9px;background:#f4f4f4"></div>
<div class="a" style="left:76px;top:308px;width:131px;height:18px;border-radius:3px;overflow:hidden"><div class="a" style="left:0px;top:0;width:9px;height:9px;background:rgb(156,156,157)"></div><div class="a" style="left:0px;top:9px;width:9px;height:9px;background:rgb(208,208,209)"></div><div class="a" style="left:9px;top:0;width:9px;height:9px;background:rgb(167,167,168)"></div><div class="a" style="left:9px;top:9px;width:9px;height:9px;background:rgb(219,219,220)"></div><div class="a" style="left:18px;top:0;width:9px;height:9px;background:rgb(165,165,166)"></div><div class="a" style="left:18px;top:9px;width:9px;height:9px;background:rgb(217,217,218)"></div><div class="a" style="left:27px;top:0;width:9px;height:9px;background:rgb(163,163,164)"></div><div class="a" style="left:27px;top:9px;width:9px;height:9px;background:rgb(215,215,216)"></div><div class="a" style="left:36px;top:0;width:9px;height:9px;background:rgb(174,174,175)"></div><div class="a" style="left:36px;top:9px;width:9px;height:9px;background:rgb(226,226,227)"></div><div class="a" style="left:45px;top:0;width:9px;height:9px;background:rgb(190,190,191)"></div><div class="a" style="left:45px;top:9px;width:9px;height:9px;background:rgb(238,238,239)"></div><div class="a" style="left:54px;top:0;width:9px;height:9px;background:rgb(166,166,167)"></div><div class="a" style="left:54px;top:9px;width:9px;height:9px;background:rgb(218,218,219)"></div><div class="a" style="left:63px;top:0;width:9px;height:9px;background:rgb(211,211,212)"></div><div class="a" style="left:63px;top:9px;width:9px;height:9px;background:rgb(238,238,239)"></div><div class="a" style="left:72px;top:0;width:9px;height:9px;background:rgb(216,216,217)"></div><div class="a" style="left:72px;top:9px;width:9px;height:9px;background:rgb(238,238,239)"></div><div class="a" style="left:81px;top:0;width:9px;height:9px;background:rgb(157,157,158)"></div><div class="a" style="left:81px;top:9px;width:9px;height:9px;background:rgb(209,209,210)"></div><div class="a" style="left:90px;top:0;width:9px;height:9px;background:rgb(172,172,173)"></div><div class="a" style="left:90px;top:9px;width:9px;height:9px;background:rgb(224,224,225)"></div><div class="a" style="left:99px;top:0;width:9px;height:9px;background:rgb(173,173,174)"></div><div class="a" style="left:99px;top:9px;width:9px;height:9px;background:rgb(225,225,226)"></div><div class="a" style="left:108px;top:0;width:9px;height:9px;background:rgb(195,195,196)"></div><div class="a" style="left:108px;top:9px;width:9px;height:9px;background:rgb(238,238,239)"></div><div class="a" style="left:117px;top:0;width:9px;height:9px;background:rgb(190,190,191)"></div><div class="a" style="left:117px;top:9px;width:9px;height:9px;background:rgb(238,238,239)"></div><div class="a" style="left:126px;top:0;width:9px;height:9px;background:rgb(199,199,200)"></div><div class="a" style="left:126px;top:9px;width:9px;height:9px;background:rgb(238,238,239)"></div></div>
<div class="t" style="left:16px;top:344px;width:40px;text-align:center;color:#303133">7</div>
<div class="t" style="left:208px;top:344px;width:120px;padding-left:15px;overflow:hidden;color:#303133">工程系统</div>
<div class="t" style="left:450px;top:344px;width:120px;padding-left:15px;overflow:hidden;color:#303133">*面板插座</div>
<div class="t" style="left:571px;top:344px;width:100px;padding-left:15px;overflow:hidden;color:#303133">02WJ1000E12</div>
<div class="t" style="left:672px;top:344px;width:139px;padding-left:15px;overflow:hidden;color:#303133">10孔</div>
<div class="t" style="left:812px;top:344px;width:139px;padding-left:15px;overflow:hidden;color:#303133">10孔</div>
<div class="t" style="left:952px;top:344px;width:139px;padding-left:15px;overflow:hidden;color:#303133">个</div>
<div class="t" style="left:1092px;top:344px;width:139px;padding-left:15px;overflow:hidden;color:#303133">54</div>
<div class="t" style="left:1232px;top:344px;width:150px;padding-left:15px;overflow:hidden;color:#303133">院方</div>
<div class="t" style="left:1383px;top:344px;width:150px;padding-left:15px;overflow:hidden;color:#303133">2025-09-08 11:08</div>
<div class="t" style="left:1534px;top:344px;width:122px;padding-left:15px;overflow:hidden;color:#303133">姜新康</div>
<div class="a" style="left:68px;top:343px;width:141px;height:20px;border-radius:9px;background:#f4f4f4"></div>
<div class="a" style="left:76px;top:344px;width:131px;height:18px;border-radius:3px;overflow:hidden"><div class="a" style="left:0px;top:0;width:9px;height:9px;background:rgb(201,201,202)"></div><div class="a" style="left:0px;top:9px;width:9px;height:9px;background:rgb(183,183,184)"></div><div class="a" style="left:9px;top:0;width:9px;height:9px;background:rgb(201,201,202)"></div><div class="a" style="left:9px;top:9px;width:9px;height:9px;background:rgb(183,183,184)"></div><div class="a" style="left:18px;top:0;width:9px;height:9px;background:rgb(215,215,216)"></div><div class="a" style="left:18px;top:9px;width:9px;height:9px;background:rgb(197,197,198)"></div><div class="a" style="left:27px;top:0;width:9px;height:9px;background:rgb(210,210,211)"></div><div class="a" style="left:27px;top:9px;width:9px;height:9px;background:rgb(192,192,193)"></div><div class="a" style="left:36px;top:0;width:9px;height:9px;background:rgb(209,209,210)"></div><div class="a" style="left:36px;top:9px;width:9px;height:9px;background:rgb(191,191,192)"></div><div class="a" style="left:45px;top:0;width:9px;height:9px;background:rgb(234,234,235)"></div><div class="a" style="left:45px;top:9px;width:9px;height:9px;background:rgb(224,224,225)"></div><div class="a" style="left:54px;top:0;width:9px;height:9px;background:rgb(213,213,214)"></div><div class="a" style="left:54px;top:9px;width:9px;height:9px;background:rgb(195,195,196)"></div><div class="a" style="left:63px;top:0;width:9px;height:9px;background:rgb(234,234,235)"></div><div class="a" style="left:63px;top:9px;width:9px;height:9px;background:rgb(226,226,227)"></div><div class="a" style="left:72px;top:0;width:9px;height:9px;background:rgb(234,234,235)"></div><div class="a" style="left:72px;top:9px;width:9px;height:9px;background:rgb(226,226,227)"></div><div class="a" style="left:81px;top:0;width:9px;height:9px;background:rgb(189,189,190)"></div><div class="a" style="left:81px;top:9px;width:9px;height:9px;background:rgb(171,171,172)"></div><div class="a" style="left:90px;top:0;width:9px;height:9px;background:rgb(213,213,214)"></div><div class="a" style="left:90px;top:9px;width:9px;height:9px;background:rgb(195,195,196)"></div><div class="a" style="left:99px;top:0;width:9px;height:9px;background:rgb(211,211,212)"></div><div class="a" style="left:99px;top:9px;width:9px;height:9px;background:rgb(193,193,194)"></div><div class="a" style="left:108px;top:0;width:9px;height:9px;background:rgb(234,234,235)"></div><div class="a" style="left:108px;top:9px;width:9px;height:9px;background:rgb(224,224,225)"></div><div class="a" style="left:117px;top:0;width:9px;height:9px;background:rgb(231,231,232)"></div><div class="a" style="left:117px;top:9px;width:9px;height:9px;background:rgb(213,213,214)"></div><div class="a" style="left:126px;top:0;width:9px;height:9px;background:rgb(233,233,234)"></div><div class="a" style="left:126px;top:9px;width:9px;height:9px;background:rgb(215,215,216)"></div></div>
<div class="t" style="left:16px;top:385px;width:40px;text-align:center;color:#303133">8</div>
<div class="t" style="left:208px;top:385px;width:120px;padding-left:15px;overflow:hidden;color:#303133">工程系统</div>
<div class="t" style="left:450px;top:385px;width:120px;padding-left:15px;overflow:hidden;color:#303133">*麻花钻头</div>
<div class="t" style="left:571px;top:385px;width:100px;padding-left:15px;overflow:hidden;color:#303133">02WJ1000E12</div>
<div class="t" style="left:672px;top:385px;width:139px;padding-left:15px;overflow:hidden;color:#303133">DN4-6</div>
<div class="t" style="left:812px;top:385px;width:139px;padding-left:15px;overflow:hidden;color:#303133">DN4-6</div>
<div class="t" style="left:952px;top:385px;width:139px;padding-left:15px;overflow:hidden;color:#303133">根</div>
<div class="t" style="left:1092px;top:385px;width:139px;padding-left:15px;overflow:hidden;color:#303133">35</div>
<div class="t" style="left:1232px;top:385px;width:150px;padding-left:15px;overflow:hidden;color:#303133">院方</div>
<div class="t" style="left:1383px;top:385px;width:150px;padding-left:15px;overflow:hidden;color:#303133">2025-09-08 11:08</div>
<div class="t" style="left:1534px;top:385px;width:122px;padding-left:15px;overflow:hidden;color:#303133">姜新康</div>
<div class="a" style="left:68px;top:388px;width:141px;height:20px;border-radius:9px;background:#f4f4f4"></div>
<div class="a" style="left:76px;top:389px;width:131px;height:18px;border-radius:3px;overflow:hidden"><div class="a" style="left:0px;top:0;width:9px;height:9px;background:rgb(155,155,156)"></div><div class="a" style="left:0px;top:9px;width:9px;height:9px;background:rgb(207,207,208)"></div><div class="a" style="left:9px;top:0;width:9px;height:9px;background:rgb(170,170,171)"></div><div class="a" style="left:9px;top:9px;width:9px;height:9px;background:rgb(222,222,223)"></div><div class="a" style="left:18px;top:0;width:9px;height:9px;background:rgb(163,163,164)"></div><div class="a" style="left:18px;top:9px;width:9px;height:9px;background:rgb(215,215,216)"></div><div class="a" style="left:27px;top:0;width:9px;height:9px;background:rgb(164,164,165)"></div><div class="a" style="left:27px;top:9px;width:9px;height:9px;background:rgb(216,216,217)"></div><div class="a" style="left:36px;top:0;width:9px;height:9px;background:rgb(166,166,167)"></div><div class="a" style="left:36px;top:9px;width:9px;height:9px;background:rgb(218,218,219)"></div><div class="a" style="left:45px;top:0;width:9px;height:9px;background:rgb(190,190,191)"></div><div class="a" style="left:45px;top:9px;width:9px;height:9px;background:rgb(238,238,239)"></div><div class="a" style="left:54px;top:0;width:9px;height:9px;background:rgb(166,166,167)"></div><div class="a" style="left:54px;top:9px;width:9px;height:9px;background:rgb(218,218,219)"></div><div class="a" style="left:63px;top:0;width:9px;height:9px;background:rgb(208,208,209)"></div><div class="a" style="left:63px;top:9px;width:9px;height:9px;background:rgb(238,238,239)"></div><div class="a" style="left:72px;top:0;width:9px;height:9px;background:rgb(218,218,219)"></div><div class="a" style="left:72px;top:9px;width:9px;height:9px;background:rgb(238,238,239)"></div><div class="a" style="left:81px;top:0;width:9px;height:9px;background:rgb(152,152,153)"></div><div class="a" style="left:81px;top:9px;width:9px;height:9px;background:rgb(204,204,205)"></div><div class="a" style="left:90px;top:0;width:9px;height:9px;background:rgb(171,171,172)"></div><div class="a" style="left:90px;top:9px;width:9px;height:9px;background:rgb(223,223,224)"></div><div class="a" style="left:99px;top:0;width:9px;height:9px;background:rgb(162,162,163)"></div><div class="a" style="left:99px;top:9px;width:9px;height:9px;background:rgb(214,214,215)"></div><div class="a" style="left:108px;top:0;width:9px;height:9px;background:rgb(199,199,200)"></div><div class="a" style="left:108px;top:9px;width:9px;height:9px;background:rgb(238,238,239)"></div><div class="a" style="left:117px;top:0;width:9px;height:9px;background:rgb(191,191,192)"></div><div class="a" style="left:117px;top:9px;width:9px;height:9px;background:rgb(238,238,239)"></div><div class="a" style="left:126px;top:0;width:9px;height:9px;background:rgb(202,202,203)"></div><div class="a" style="left:126px;top:9px;width:9px;height:9px;background:rgb(238,238,239)"></div></div>
<div class="t" style="left:16px;top:426px;width:40px;text-align:center;color:#303133">9</div>
<div class="t" style="left:208px;top:426px;width:120px;padding-left:15px;overflow:hidden;color:#303133">工程系统</div>
<div class="t" style="left:450px;top:426px;width:120px;padding-left:15px;overflow:hidden;color:#303133">*小便池感应器</div>
<div class="t" style="left:571px;top:426px;width:100px;padding-left:15px;overflow:hidden;color:#303133">02WJ1000E12</div>
<div class="t" style="left:672px;top:426px;width:139px;padding-left:15px;overflow:hidden;color:#303133">/</div>
<div class="t" style="left:812px;top:426px;width:139px;padding-left:15px;overflow:hidden;color:#303133">/</div>
<div class="t" style="left:952px;top:426px;width:139px;padding-left:15px;overflow:hidden;color:#303133">个</div>
<div class="t" style="left:1092px;top:426px;width:139px;padding-left:15px;overflow:hidden;color:#303133">14</div>
<div class="t" style="left:1232px;top:426px;width:150px;padding-left:15px;overflow:hidden;color:#303133">院方</div>
<div class="t" style="left:1383px;top:426px;width:150px;padding-left:15px;overflow:hidden;color:#303133">2025-05-20 14:10</div>
<div class="t" style="left:1534px;top:426px;width:122px;padding-left:15px;overflow:hidden;color:#303133">超级管理员</div>
<div class="a" style="left:68px;top:424px;width:141px;height:20px;border-radius:9px;background:#f4f4f4"></div>
<div class="a" style="left:76px;top:425px;width:131px;height:18px;border-radius:3px;overflow:hidden"><div class="a" style="left:0px;top:0;width:9px;height:9px;background:rgb(202,202,203)"></div><div class="a" style="left:0px;top:9px;width:9px;height:9px;background:rgb(150,150,151)"></div><div class="a" style="left:9px;top:0;width:9px;height:9px;background:rgb(216,216,217)"></div><div class="a" style="left:9px;top:9px;width:9px;height:9px;background:rgb(164,164,165)"></div><div class="a" style="left:18px;top:0;width:9px;height:9px;background:rgb(225,225,226)"></div><div class="a" style="left:18px;top:9px;width:9px;height:9px;background:rgb(173,173,174)"></div><div class="a" style="left:27px;top:0;width:9px;height:9px;background:rgb(219,219,220)"></div><div class="a" style="left:27px;top:9px;width:9px;height:9px;background:rgb(167,167,168)"></div><div class="a" style="left:36px;top:0;width:9px;height:9px;background:rgb(221,221,222)"></div><div class="a" style="left:36px;top:9px;width:9px;height:9px;background:rgb(169,169,170)"></div><div class="a" style="left:45px;top:0;width:9px;height:9px;background:rgb(238,238,239)"></div><div class="a" style="left:45px;top:9px;width:9px;height:9px;background:rgb(198,198,199)"></div><div class="a" style="left:54px;top:0;width:9px;height:9px;background:rgb(218,218,219)"></div><div class="a" style="left:54px;top:9px;width:9px;height:9px;background:rgb(166,166,167)"></div><div class="a" style="left:63px;top:0;width:9px;height:9px;background:rgb(238,238,239)"></div><div class="a" style="left:63px;top:9px;width:9px;height:9px;background:rgb(210,210,211)"></div><div class="a" style="left:72px;top:0;width:9px;height:9px;background:rgb(238,238,239)"></div><div class="a" style="left:72px;top:9px;width:9px;height:9px;background:rgb(209,209,210)"></div><div class="a" style="left:81px;top:0;width:9px;height:9px;background:rgb(198,198,199)"></div><div class="a" style="left:81px;top:9px;width:9px;height:9px;background:rgb(146,146,147)"></div><div class="a" style="left:90px;top:0;width:9px;height:9px;background:rgb(226,226,227)"></div><div class="a" style="left:90px;top:9px;width:9px;height:9px;background:rgb(174,174,175)"></div><div class="a" style="left:99px;top:0;width:9px;height:9px;background:rgb(214,214,215)"></div><div class="a" style="left:99px;top:9px;width:9px;height:9px;background:rgb(162,162,163)"></div><div class="a" style="left:108px;top:0;width:9px;height:9px;background:rgb(238,238,239)"></div><div class="a" style="left:108px;top:9px;width:9px;height:9px;background:rgb(191,191,192)"></div><div class="a" style="left:117px;top:0;width:9px;height:9px;background:rgb(235,235,236)"></div><div class="a" style="left:117px;top:9px;width:9px;height:9px;background:rgb(183,183,184)"></div><div class="a" style="left:126px;top:0;width:9px;height:9px;background:rgb(238,238,239)"></div><div class="a" style="left:126px;top:9px;width:9px;height:9px;background:rgb(199,199,200)"></div></div>
<div class="t" style="left:16px;top:467px;width:40px;text-align:center;color:#303133">10</div>
<div class="t" style="left:208px;top:467px;width:120px;padding-left:15px;overflow:hidden;color:#303133">工程系统</div>
<div class="t" style="left:450px;top:467px;width:120px;padding-left:15px;overflow:hidden;color:#303133">*公厕隔断锁</div>
<div class="t" style="left:571px;top:467px;width:100px;padding-left:15px;overflow:hidden;color:#303133">02WJ1000E12</div>
<div class="t" style="left:672px;top:467px;width:139px;padding-left:15px;overflow:hidden;color:#303133">/</div>
<div class="t" style="left:812px;top:467px;width:139px;padding-left:15px;overflow:hidden;color:#303133">/</div>
<div class="t" style="left:952px;top:467px;width:139px;padding-left:15px;overflow:hidden;color:#303133">个</div>
<div class="t" style="left:1092px;top:467px;width:139px;padding-left:15px;overflow:hidden;color:#303133">260</div>
<div class="t" style="left:1232px;top:467px;width:150px;padding-left:15px;overflow:hidden;color:#303133">院方</div>
<div class="t" style="left:1383px;top:467px;width:150px;padding-left:15px;overflow:hidden;color:#303133">2025-05-20 14:02</div>
<div class="t" style="left:1534px;top:467px;width:122px;padding-left:15px;overflow:hidden;color:#303133">超级管理员</div>
<div class="a" style="left:68px;top:469px;width:141px;height:20px;border-radius:9px;background:#f4f4f4"></div>
<div class="a" style="left:76px;top:470px;width:131px;height:18px;border-radius:3px;overflow:hidden"><div class="a" style="left:0px;top:0;width:9px;height:9px;background:rgb(158,158,159)"></div><div class="a" style="left:0px;top:9px;width:9px;height:9px;background:rgb(210,210,211)"></div><div class="a" style="left:9px;top:0;width:9px;height:9px;background:rgb(158,158,159)"></div><div class="a" style="left:9px;top:9px;width:9px;height:9px;background:rgb(210,210,211)"></div><div class="a" style="left:18px;top:0;width:9px;height:9px;background:rgb(165,165,166)"></div><div class="a" style="left:18px;top:9px;width:9px;height:9px;background:rgb(217,217,218)"></div><div class="a" style="left:27px;top:0;width:9px;height:9px;background:rgb(164,164,165)"></div><div class="a" style="left:27px;top:9px;width:9px;height:9px;background:rgb(216,216,217)"></div><div class="a" style="left:36px;top:0;width:9px;height:9px;background:rgb(168,168,169)"></div><div class="a" style="left:36px;top:9px;width:9px;height:9px;background:rgb(220,220,221)"></div><div class="a" style="left:45px;top:0;width:9px;height:9px;background:rgb(199,199,200)"></div><div class="a" style="left:45px;top:9px;width:9px;height:9px;background:rgb(238,238,239)"></div><div class="a" style="left:54px;top:0;width:9px;height:9px;background:rgb(166,166,167)"></div><div class="a" style="left:54px;top:9px;width:9px;height:9px;background:rgb(218,218,219)"></div><div class="a" style="left:63px;top:0;width:9px;height:9px;background:rgb(204,204,205)"></div><div class="a" style="left:63px;top:9px;width:9px;height:9px;background:rgb(238,238,239)"></div><div class="a" style="left:72px;top:0;width:9px;height:9px;background:rgb(217,217,218)"></div><div class="a" style="left:72px;top:9px;width:9px;height:9px;background:rgb(238,238,239)"></div><div class="a" style="left:81px;top:0;width:9px;height:9px;background:rgb(146,146,147)"></div><div class="a" style="left:81px;top:9px;width:9px;height:9px;background:rgb(198,198,199)"></div><div class="a" style="left:90px;top:0;width:9px;height:9px;background:rgb(175,175,176)"></div><div class="a" style="left:90px;top:9px;width:9px;height:9px;background:rgb(227,227,228)"></div><div class="a" style="left:99px;top:0;width:9px;height:9px;background:rgb(167,167,168)"></div><div class="a" style="left:99px;top:9px;width:9px;height:9px;background:rgb(219,219,220)"></div><div class="a" style="left:108px;top:0;width:9px;height:9px;background:rgb(195,195,196)"></div><div class="a" style="left:108px;top:9px;width:9px;height:9px;background:rgb(238,238,239)"></div><div class="a" style="left:117px;top:0;width:9px;height:9px;background:rgb(184,184,185)"></div><div class="a" style="left:117px;top:9px;width:9px;height:9px;background:rgb(236,236,237)"></div><div class="a" style="left:126px;top:0;width:9px;height:9px;background:rgb(196,196,197)"></div><div class="a" style="left:126px;top:9px;width:9px;height:9px;background:rgb(238,238,239)"></div></div>
</div>
</div>
<div class="a" style="left:1881px;top:768px;width:34px;height:93px;border-radius:17px;background:#fff;box-shadow:0 1px 2px rgba(51,112,255,.6),0 0 1px 1px rgba(51,112,255,.15)">
<svg class="a" style="left:6px;top:5px" width="24" height="24" viewBox="0 0 24 24"><path d="M10.4 21.4H4.6V14H1.2L2.6 10.5Q4 1 13 0.9Q22.3 1 22.3 10.5Q22.3 14.5 19.4 17.8V22" fill="none" stroke="#3370ff" stroke-width="1.6" stroke-linejoin="round" stroke-linecap="round"/><text x="7.6" y="14.3" font-family="Liberation Sans" font-weight="bold" font-size="11" fill="#3370ff">AI</text></svg>
<div class="a" style="left:0;top:32px;width:34px;text-align:center;font-size:14px;line-height:19.3px;color:#333">AI<br>助<br>手</div>
</div>
<!-- SCROLLBAR -->
<div class="a" style="left:1917px;top:98px;width:3px;height:480px;border-radius:2px;background:#ababab"></div>

<!-- FOOTER -->
<div class="t" style="left:0;top:884px;width:1920px;text-align:center;color:#333;font-size:14px">蜀ICP备19034998号</div>
</body>
</html>
